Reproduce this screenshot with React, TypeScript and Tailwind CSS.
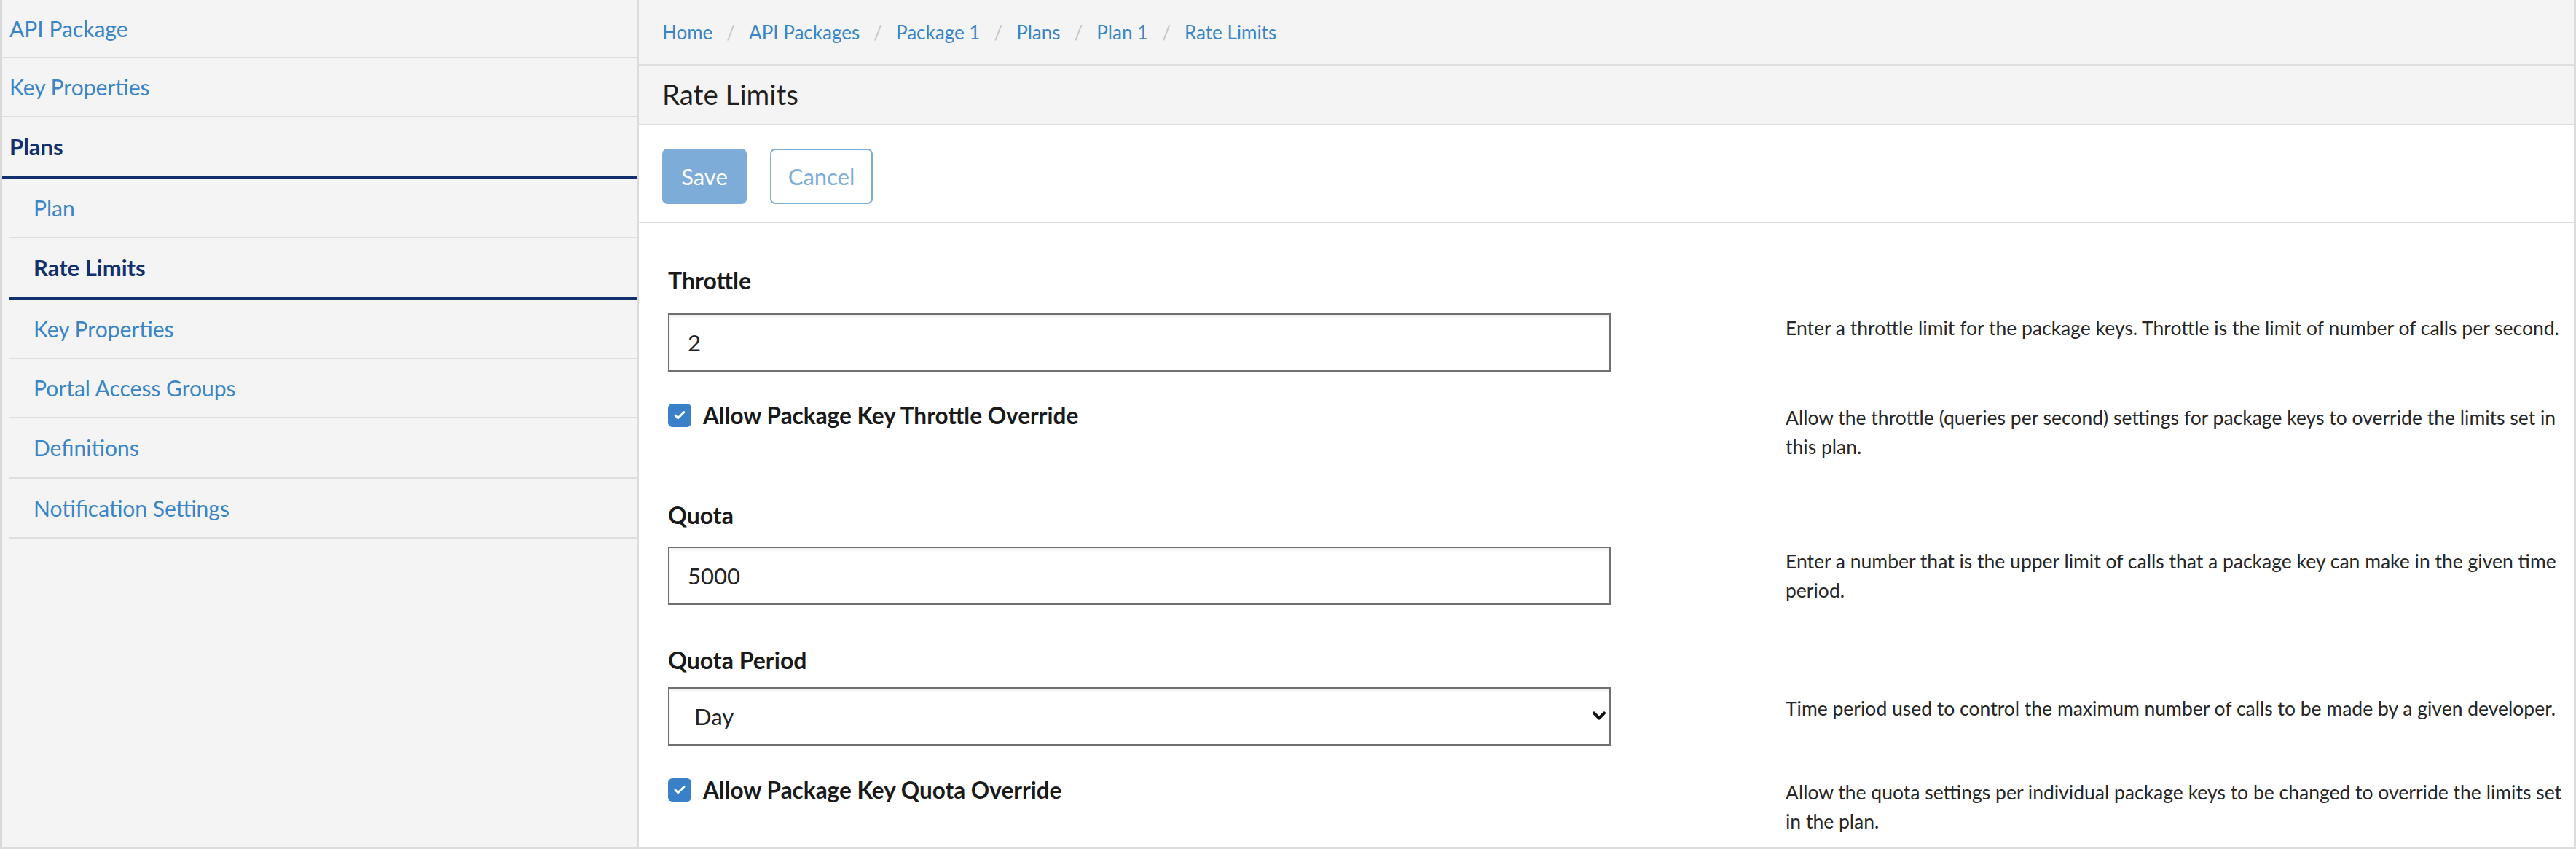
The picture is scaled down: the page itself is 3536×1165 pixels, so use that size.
import { Check, ChevronDown } from "lucide-react";

const crumbs = ["Home", "API Packages", "Package 1", "Plans", "Plan 1", "Rate Limits"];

const subNav = [
  { label: "Plan", active: false, h: "h-[81px]" },
  { label: "Rate Limits", active: true, h: "h-[85px]" },
  { label: "Key Properties", active: false, h: "h-[81px]" },
  { label: "Portal Access Groups", active: false, h: "h-[81px]" },
  { label: "Definitions", active: false, h: "h-[83px]" },
  { label: "Notification Settings", active: false, h: "h-[82px]" },
];

function Help({ children, className = "" }: { children: React.ReactNode; className?: string }) {
  return <p className={`text-[26.5px] leading-[40px] text-[#262626] ${className}`}>{children}</p>;
}

function Checkbox({ label }: { label: string }) {
  return (
    <label className="flex items-center gap-[16px]">
      <span className="w-[32px] h-[32px] rounded-[6px] bg-[#3a80c8] flex items-center justify-center">
        <Check className="w-[18px] h-[18px] text-white" strokeWidth={4} />
      </span>
      <span className="text-[31.5px] leading-[40px] font-bold text-[#1a1a1a]">{label}</span>
    </label>
  );
}

function Label({ children, className = "" }: { children: React.ReactNode; className?: string }) {
  return <div className={`text-[32px] leading-[40px] font-bold text-[#1a1a1a] ${className}`}>{children}</div>;
}

export default function App() {
  return (
    <div className="flex h-[1165px] w-[3536px] border-b-[3px] border-[#dcdcdc] font-['Lato',sans-serif] overflow-hidden">
      {/* sidebar */}
      <aside className="w-[875px] shrink-0 bg-[#f4f4f4] border-l-[3px] border-[#d9d9d9]">
        <a className="flex items-center h-[80px] px-[10px] border-b-2 border-[#dedede] text-[30px] text-[#3a85c7]">API Package</a>
        <a className="flex items-center h-[81px] px-[10px] border-b-2 border-[#dedede] text-[30px] text-[#3a85c7]">Key Properties</a>
        <a className="flex items-center h-[85px] px-[10px] border-b-4 border-[#13306e] text-[31px] font-bold text-[#13306e]">Plans</a>
        <div className="ml-[10px]">
          {subNav.map((item) => (
            <a
              key={item.label}
              className={`flex items-center pl-[33px] ${item.h} ${
                item.active
                  ? "border-b-4 border-[#13306e] text-[31px] font-bold text-[#13306e]"
                  : "border-b-2 border-[#dedede] text-[30px] text-[#3a85c7]"
              }`}
            >
              {item.label}
            </a>
          ))}
        </div>
      </aside>

      {/* main */}
      <main className="flex-1 flex flex-col border-l-2 border-r-[3px] border-[#dcdcdc] bg-white">
        <nav className="h-[90px] flex items-center px-[32px] bg-[#f4f4f4] border-b-2 border-[#dedede] text-[26px]">
          {crumbs.map((c, i) => (
            <span key={c} className="flex items-center">
              {i > 0 && <span className="px-[19px] text-[#c4c4c4]">/</span>}
              <a className="text-[#3a85c7]">{c}</a>
            </span>
          ))}
        </nav>

        <div className="h-[82px] flex items-center px-[32px] bg-[#f4f4f4] border-b-2 border-[#dedede]">
          <h1 className="text-[38.5px] text-[#1f1f1f]">Rate Limits</h1>
        </div>

        <div className="h-[134px] flex items-start gap-[32px] px-[32px] pt-[32px] border-b-2 border-[#dedede]">
          <button className="h-[76px] w-[116px] rounded-[7px] bg-[#7eacd8] text-white text-[31px]">Save</button>
          <button className="h-[76px] w-[141px] rounded-[7px] border-2 border-[#7eacd8] text-[#7eacd8] text-[31px]">
            Cancel
          </button>
        </div>

        <div className="flex-1 pl-[40px] pr-[8px] pt-[59px]">
          <div className="grid grid-cols-[1294px_1fr] gap-x-[240px]">
            <Label>Throttle</Label>
            <div />

            <input
              readOnly
              value="2"
              className="mt-[25px] h-[80px] border-2 border-[#707070] shadow-[inset_0_3px_3px_rgba(0,0,0,0.06)] px-[25px] text-[31px] text-[#222] outline-none"
            />
            <Help className="mt-[25px]">
              Enter a throttle limit for the package keys. Throttle is the limit of number of calls per second.
            </Help>

            <div className="mt-[40px]">
              <Checkbox label="Allow Package Key Throttle Override" />
            </div>
            <Help className="mt-[43px]">
              Allow the throttle (queries per second) settings for package keys to override the limits set in this plan.
            </Help>

            <Label className="mt-[54px]">Quota</Label>
            <div />

            <input
              readOnly
              value="5000"
              className="mt-[23px] h-[80px] border-2 border-[#707070] shadow-[inset_0_3px_3px_rgba(0,0,0,0.06)] px-[25px] text-[31px] text-[#222] outline-none"
            />
            <Help className="mt-[23px]">
              Enter a number that is the upper limit of calls that a package key can make in the given time period.
            </Help>

            <Label className="mt-[56px]">Quota Period</Label>
            <div />

            <div className="relative mt-[17px]">
              <select
                defaultValue="Day"
                className="appearance-none w-full h-[80px] border-2 border-[#707070] shadow-[inset_0_3px_3px_rgba(0,0,0,0.06)] bg-white pl-[34px] text-[31px] text-[#222] outline-none"
              >
                <option>Day</option>
                <option>Hour</option>
                <option>Month</option>
              </select>
              <ChevronDown
                className="absolute right-[2px] top-[25px] w-[28px] h-[28px] text-[#111] pointer-events-none"
                strokeWidth={3.5}
              />
            </div>
            <Help className="mt-[26px]">
              Time period used to control the maximum number of calls to be made by a given developer.
            </Help>

            <div className="mt-[41px]">
              <Checkbox label="Allow Package Key Quota Override" />
            </div>
            <Help className="mt-[44px]">
              Allow the quota settings per individual package keys to be changed to override the limits set in the plan.
            </Help>
          </div>
        </div>
      </main>
    </div>
  );
}
